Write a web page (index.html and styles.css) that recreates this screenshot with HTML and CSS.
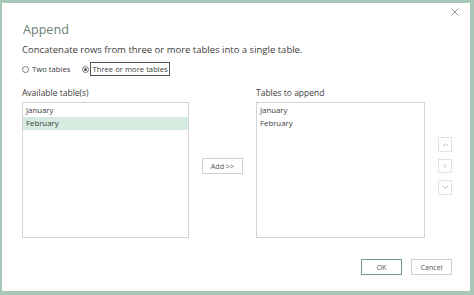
FILE: index.html
```html
<!DOCTYPE html>
<html lang="en">
<head>
    <meta charset="UTF-8">
    <meta name="viewport" content="width=device-width, initial-scale=1.0">
    <title>Append</title>
    <link rel="stylesheet" href="styles.css">
</head>
<body>
    <div class="dialog">
        <div class="close">
            <svg width="8" height="8" viewBox="0 0 8 8"><path d="M0.5 0.5 L7.5 7.5 M7.5 0.5 L0.5 7.5" stroke="#8a8a8a" stroke-width="0.9"/></svg>
        </div>
        <h1 class="title">Append</h1>
        <p class="desc">Concatenate rows from three or more tables into a single table.</p>

        <div class="radios">
            <label class="radio"><span class="dot"></span>Two tables</label>
            <label class="radio checked"><span class="dot"></span><span class="focus">Three or more tables</span></label>
        </div>

        <div class="lists">
            <div class="col col_left">
                <div class="label">Available table(s)</div>
                <ul class="listbox">
                    <li>January</li>
                    <li class="selected">February</li>
                </ul>
            </div>
            <div class="middle">
                <button class="btn add">Add &gt;&gt;</button>
            </div>
            <div class="col col_right">
                <div class="label">Tables to append</div>
                <ul class="listbox">
                    <li>January</li>
                    <li>February</li>
                </ul>
            </div>
            <div class="side">
                <button class="sq">
                    <svg width="7" height="5" viewBox="0 0 7 5"><path d="M1 4 L3.5 1.5 L6 4" fill="none" stroke="#b8b8b8"/></svg>
                </button>
                <button class="sq">
                    <svg width="6" height="6" viewBox="0 0 6 6"><path d="M1 1 L5 5 M5 1 L1 5" fill="none" stroke="#dcdcdc"/></svg>
                </button>
                <button class="sq">
                    <svg width="7" height="5" viewBox="0 0 7 5"><path d="M1 1 L3.5 3.5 L6 1" fill="none" stroke="#b8b8b8"/></svg>
                </button>
            </div>
        </div>

        <div class="footer">
            <button class="btn ok">OK</button>
            <button class="btn cancel">Cancel</button>
        </div>
    </div>
</body>
</html>
```

FILE: styles.css
```css
* { margin: 0; padding: 0; box-sizing: border-box; }
li { list-style: none; }
html, body { width: 474px; height: 295px; overflow: hidden; }
body {
    background: #a8c7b7;
    font-family: "Open Sans", "Noto Sans", sans-serif;
    color: #3c3c3c;
}
.dialog {
    position: relative;
    width: 468px;
    height: 288px;
    margin: 3px 0 0 2px;
    background: #fff;
    padding: 17px 18px 0 20px;
}
.close {
    position: absolute;
    right: 11px;
    top: 5px;
}
.close svg { display: block; }
.title {
    font-weight: normal;
    font-size: 12.6px;
    line-height: 20px;
    color: #6d8175;
    padding-left: 1px;
}
.desc {
    margin-top: 3px;
    font-size: 9.5px;
    line-height: 14px;
}
.radios {
    display: flex;
    height: 14px;
    margin-top: 5px;
    font-size: 7.7px;
    line-height: 12px;
}
.radio {
    display: flex;
    align-items: center;
    margin-right: 12px;
}
.dot {
    width: 7px;
    height: 7px;
    border: 1px solid #777;
    border-radius: 50%;
    margin: 0 3px 0 0;
    position: relative;
}
.checked .dot { margin-right: 1px; }
.checked .dot::after {
    content: "";
    position: absolute;
    left: 1px;
    top: 1px;
    width: 3px;
    height: 3px;
    border-radius: 50%;
    background: #555;
}
.focus {
    border: 1px solid #555;
    padding: 0 1px;
    line-height: 12px;
}
.lists {
    display: flex;
    margin-top: 11px;
}
.label {
    font-size: 8.5px;
    line-height: 12px;
    margin-bottom: 3px;
}
.col_left { width: 167px; }
.col_right { width: 169px; }
.listbox {
    height: 136px;
    border: 1px solid #d4d4d4;
    padding-top: 1px;
    font-size: 7.8px;
}
.listbox li {
    height: 13px;
    line-height: 13px;
    padding-left: 3px;
}
.listbox li.selected { background: #d6ebe0; }
.middle {
    width: 67px;
    display: flex;
    align-items: center;
    justify-content: center;
    padding-top: 6px;
}
.btn {
    font-family: inherit;
    font-size: 7.2px;
    color: #555;
    background: #fff;
    border: 1px solid #d0d0d0;
    height: 16px;
}
.add { width: 41px; }
.side {
    display: flex;
    flex-direction: column;
    gap: 7px;
    margin: 50px 0 0 13px;
}
.sq {
    width: 14px;
    height: 14.5px;
    border: 1px solid #e2e2e2;
    background: #fff;
    display: flex;
    align-items: center;
    justify-content: center;
}
.footer {
    display: flex;
    justify-content: flex-end;
    gap: 9px;
    margin-top: 21px;
}
.ok { width: 41px; border-color: #6f9a86; }
.cancel { width: 41px; }
```
